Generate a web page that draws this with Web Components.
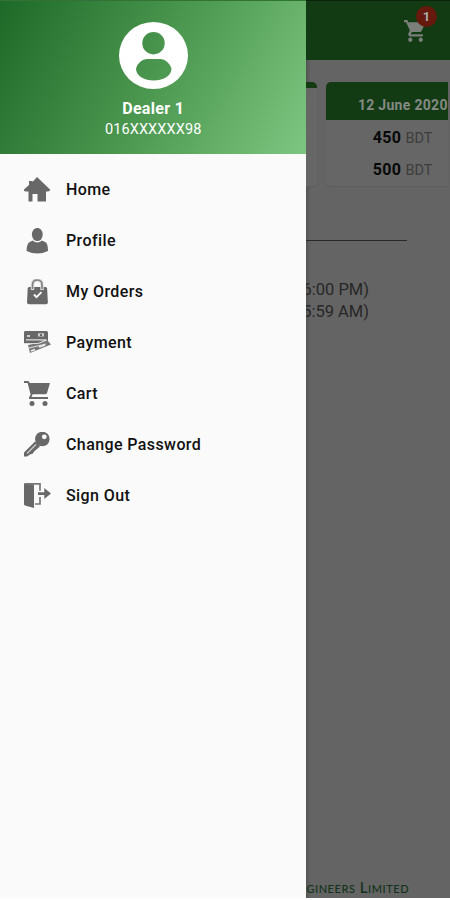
<!DOCTYPE html>
<html lang="en">
<head>
<meta charset="utf-8">
<title>Dealer</title>
<style>
  html, body { margin: 0; height: 900px; overflow: hidden; background: #fff; }
  body { font-family: Roboto, "Liberation Sans", sans-serif; }
</style>
</head>
<body>
<app-shell>
  <drawer-header slot="drawer" name="Dealer 1" phone="016XXXXXX98"></drawer-header>
  <nav-item slot="drawer" icon="home">Home</nav-item>
  <nav-item slot="drawer" icon="profile">Profile</nav-item>
  <nav-item slot="drawer" icon="orders">My Orders</nav-item>
  <nav-item slot="drawer" icon="payment">Payment</nav-item>
  <nav-item slot="drawer" icon="cart">Cart</nav-item>
  <nav-item slot="drawer" icon="key">Change Password</nav-item>
  <nav-item slot="drawer" icon="signout">Sign Out</nav-item>

  <top-bar count="1"></top-bar>
  <rate-cards></rate-cards>
  <order-hours></order-hours>
  <page-footer>gineers Limited</page-footer>
</app-shell>

<script>
const icons = {
  home: '<path d="M13 0 26 12.5Q26.5 14.5 24 14.5H22V24.500H13.500V17H8.500V24.500H4.500V14.500H2Q-.5 14.500 0 12.500L5 8V4H8.500V5Z"/>',
  profile: '<ellipse cx="13.300" cy="6.500" rx="5.400" ry="6.600"/><path d="M8.500 12.500Q13.300 16.700 18 12.500L22 14.500Q24 16.500 24 23Q13.300 28 2.600 23Q2.600 16.500 5 14.500Z"/>',
  orders: '<path d="M5 8h16.500q1.500 0 1.600 1.500l.8 14q0 1.800-2 1.800H5q-2 0-2-1.800L3.700 9.500Q3.800 8 5 8Z"/><path d="M8.500 11V6Q8.500 1 13.300 1T18 6v5" fill="none" stroke="#ddd" stroke-width="3.500"/><path d="M8.500 10V6Q8.500 1 13.300 1T18 6v4" fill="none" stroke="#808080" stroke-width="1.600"/><path d="m10 15.500 2.500 2.700 5-5" fill="none" stroke="#fafafa" stroke-width="1.900"/>',
  payment: '<path d="M1 1h21.500q1.500 0 1.500 1.500V13H0V2.500Q0 1 1 1Z"/><path d="m4 15 20-4 3 3.500L6 23Z" fill="#777"/><path d="M3 5h3v2H3ZM14 3.300h6v3.200h-6Z" fill="#ccc"/><path d="M16 4h2v2h-2Z" fill="#666"/><path d="M2 9.800h20M0 13.500h14L23 10M5 18l17-4" fill="none" stroke="#ddd" stroke-width="1.200"/><path d="m7 21 4-1.500M15 17l6-2" fill="none" stroke="#eee" stroke-width="1.800"/>',
  cart: '<path d="M0 0h4.500l1.300 2H26l-3 10q-.4 1.300-2 1.300H8.700L7.500 16H24v2H6q-1.500 0-1-1.500l1.600-3L3.600 2H0Z"/><circle cx="8" cy="22.500" r="2.500"/><circle cx="21" cy="22.500" r="2.500"/>',
  key: '<circle cx="18.300" cy="7" r="7.300"/><path d="m11 9.500 5 5-6 5-1 2-3 1-3 2H0v-4Z"/><circle cx="20.300" cy="4.800" r="2.400" fill="#fafafa"/><path d="m3 21.500 9-9" stroke="#ccc" stroke-width="1.200"/>',
  signout: '<path d="M0 1.200Q0 0 1.500 0L10 1.500V25L1 22.500Q0 22 0 21Z"/><path d="M2 .8h14v7M16 14v7h-5" fill="none" stroke="#777" stroke-width="1.700"/><path d="M14 9.200h6.300V5L27 10.500l-6.700 5.600v-4.200H14Z"/>'
};

class AppShell extends HTMLElement {
  constructor() {
    super();
    this.attachShadow({ mode: 'open' }).innerHTML = `
    <style>
      :host { display: flex; width: 450px; height: 898px; overflow: hidden; }
      aside { flex: 0 0 306.400px; background: #fafafa; overflow: hidden; }
      main {
        flex: 1; min-width: 0; overflow: hidden; display: flex; flex-direction: column;
        background: linear-gradient(90deg, #545454, #646464 5px, #646464);
      }
    </style>
    <aside><slot name="drawer"></slot></aside>
    <main><slot></slot></main>`;
  }
}
customElements.define('app-shell', AppShell);

class DrawerHeader extends HTMLElement {
  connectedCallback() {
    this.attachShadow({ mode: 'open' }).innerHTML = `
    <style>
      :host {
        display: flex; flex-direction: column; align-items: center; box-sizing: border-box;
        height: 154px; padding-top: 21px; margin-bottom: 10px; color: #fff;
        border-top: 1.500px solid #2e7436;
        background: linear-gradient(117deg, #1f6928 0%, #4b974f 50%, #7dc681 100%);
      }
      svg { display: block; width: 69px; height: 67px; }
      b { margin-top: 10px; font-size: 16px; line-height: 20px; letter-spacing: .3px; }
      span { font-size: 14.500px; line-height: 21px; letter-spacing: .1px; }
    </style>
    <svg viewBox="0 0 69 67" preserveAspectRatio="none">
      <path fill="#fff" fill-rule="evenodd" d="M34.500 0a34.500 33.500 0 1 1 0 67a34.500 33.500 0 1 1 0-67ZM34.500 10a11.200 11.200 0 1 0 0 22.400a11.200 11.200 0 1 0 0-22.400ZM28 37q-8 .5-11 9.500c0 16 35.500 16 35.500 0Q49 37.500 41.500 37Z"/>
    </svg>
    <b>${this.getAttribute('name')}</b>
    <span>${this.getAttribute('phone')}</span>`;
  }
}
customElements.define('drawer-header', DrawerHeader);

class NavItem extends HTMLElement {
  connectedCallback() {
    this.attachShadow({ mode: 'open' }).innerHTML = `
    <style>
      :host {
        display: flex; align-items: center; gap: 15px; height: 51px; padding-left: 24px;
        font-size: 16px; font-weight: 500; letter-spacing: .4px; color: #111;
      }
      svg { display: block; width: 27px; height: 26px; fill: #686868; }
    </style>
    <svg viewBox="0 0 27 26">${icons[this.getAttribute('icon')]}</svg>
    <slot></slot>`;
  }
}
customElements.define('nav-item', NavItem);

class TopBar extends HTMLElement {
  connectedCallback() {
    this.attachShadow({ mode: 'open' }).innerHTML = `
    <style>
      :host {
        display: flex; justify-content: flex-end; box-sizing: border-box; flex: 0 0 60px;
        padding: 19px 24px 0 0; background: #123a13; border-top: 1.500px solid #0b250c;
      }
      div { position: relative; width: 22px; height: 22px; }
      svg { display: block; fill: #7a7f7a; }
      span {
        position: absolute; left: 12px; top: -14px; width: 21px; height: 21px; border-radius: 50%;
        background: #651a0d; color: #aaa; font-size: 13px; font-weight: 700;
        line-height: 21px; text-align: center;
      }
    </style>
    <div>
      <svg width="22" height="22" viewBox="1 2 21 20" preserveAspectRatio="none"><path d="M7 18c-1.100 0-2 .9-2 2s.9 2 2 2 2-.9 2-2-.9-2-2-2zM1 2v2h2l3.600 7.600L5.250 14C4.520 15.370 5.480 17 7 17h12v-2H7.420l1.130-2h7.450c.75 0 1.410-.41 1.750-1.030L21.700 4H5.210l-.94-2zm16 16c-1.100 0-2 .9-2 2s.9 2 2 2 2-.9 2-2-.9-2-2-2z"/></svg>
      <span>${this.getAttribute('count')}</span>
    </div>`;
  }
}
customElements.define('top-bar', TopBar);

class RateCards extends HTMLElement {
  constructor() {
    super();
    this.attachShadow({ mode: 'open' }).innerHTML = `
    <style>
      :host { display: flex; gap: 9px; flex: 0 0 104px; height: 104px; margin-top: 22px; }
      section { box-shadow: 0 1px 1px #5c5c5c; background: #666; overflow: hidden; }
      .prev { flex: 0 0 10.500px; border-radius: 0 5px 3px 0; }
      .prev header { height: 6px; background: #123a13; }
      .day { flex: 0 0 122.500px; border-radius: 5px 0 0 3px; }
      .day header {
        height: 37.500px; padding-left: 32px; box-sizing: border-box; background: #123a13;
        color: #858a85; font-size: 14px; font-weight: 700; line-height: 46px;
        letter-spacing: .3px; white-space: nowrap;
      }
      p {
        display: flex; justify-content: flex-end; align-items: baseline; gap: 4px; height: 32px;
        margin: 0; padding-right: 16px; font-size: 14.500px; line-height: 32px; color: #3d3d3d;
      }
      .day header + p { margin-top: 2px; }
      b { font-size: 16px; letter-spacing: .4px; color: #080808; }
    </style>
    <section class="prev"><header></header></section>
    <section class="day">
      <header>12 June 2020</header>
      <p><b>450</b>BDT</p>
      <p><b>500</b>BDT</p>
    </section>`;
  }
}
customElements.define('rate-cards', RateCards);

class OrderHours extends HTMLElement {
  constructor() {
    super();
    this.attachShadow({ mode: 'open' }).innerHTML = `
    <style>
      :host {
        display: flex; flex-direction: column; align-items: flex-end; margin: 54px 43px 0 0;
        font-size: 16.500px; line-height: 22px; color: #272727;
      }
      hr { width: 100%; height: 1px; margin: 0 0 38px; border: 0; background: #252b25; }
      span { margin-right: 38px; white-space: nowrap; }
    </style>
    <hr>
    <span>6:00 PM)</span>
    <span>5:59 AM)</span>`;
  }
}
customElements.define('order-hours', OrderHours);

class PageFooter extends HTMLElement {
  constructor() {
    super();
    this.attachShadow({ mode: 'open' }).innerHTML = `
    <style>
      :host {
        display: block; margin: auto 42px 1px 0; text-align: right; white-space: nowrap;
        font-family: Lato, sans-serif; font-size: 15px; font-weight: 500; line-height: 20px;
        letter-spacing: .550px; font-variant: small-caps; color: #12331a;
      }
    </style>
    <slot></slot>`;
  }
}
customElements.define('page-footer', PageFooter);
</script>
</body>
</html>
